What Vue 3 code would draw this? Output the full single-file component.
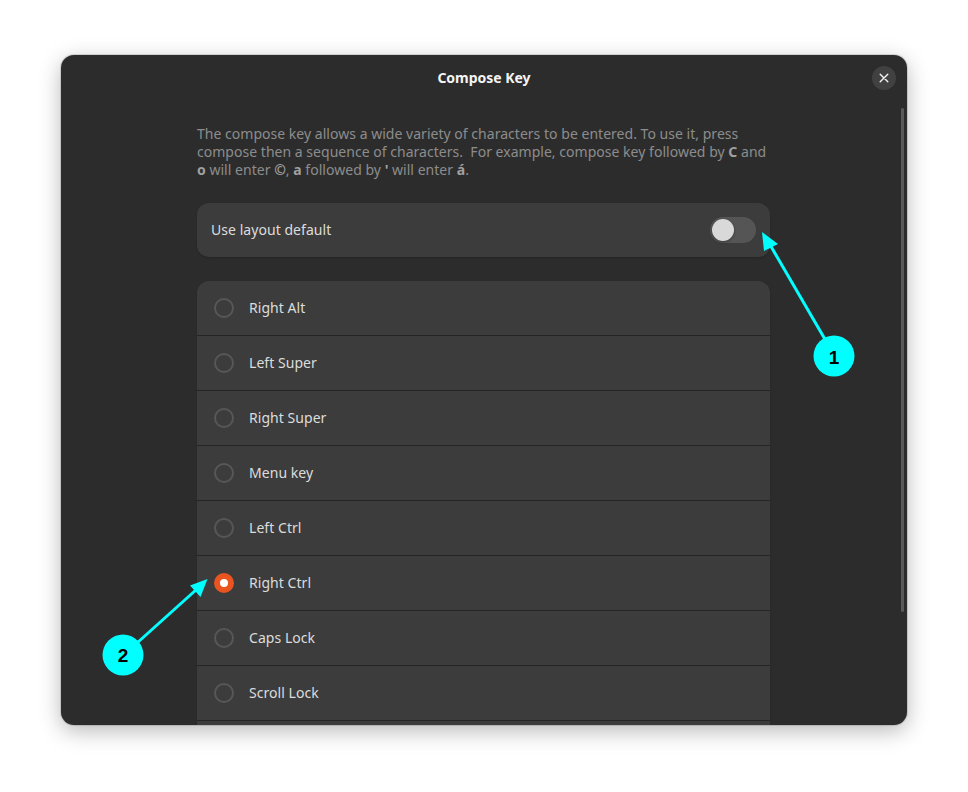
<template>
  <div class="page">
    <section class="dialog">
      <header class="dialog__header">
        <h1 class="dialog__title">Compose Key</h1>
        <button type="button" class="dialog__close" aria-label="Close">
          <svg width="10" height="10" viewBox="0 0 10 10">
            <path d="M1.2 1.2L8.8 8.8M8.8 1.2L1.2 8.8" stroke="#f2f2f2" stroke-width="1.4" stroke-linecap="round" />
          </svg>
        </button>
      </header>

      <div class="dialog__body">
        <p class="hint">
          The compose key allows a wide variety of characters to be entered. To use it, press<br />
          compose then a sequence of characters.&nbsp; For example, compose key followed by <b>C</b> and<br />
          <b>o</b> will enter <b>©</b>, <b>a</b> followed by <b>'</b> will enter <b>á</b>.
        </p>

        <div class="card card--switch">
          <span class="row__label">Use layout default</span>
          <span class="switch"><span class="switch__knob"></span></span>
        </div>

        <ul class="card options">
          <li v-for="opt in options" :key="opt" class="row">
            <span class="radio" :class="{ 'radio--on': opt === selected }"></span>
            <span class="row__label">{{ opt }}</span>
          </li>
        </ul>
      </div>

      <div class="scrollbar"></div>
    </section>

    <svg class="notes" width="968" height="792" viewBox="0 0 968 792">
      <g stroke="#00ffff" stroke-width="3" fill="#00ffff">
        <line x1="826" y1="341" x2="769" y2="243" />
        <line x1="137" y1="643" x2="197" y2="589" />
      </g>
      <polygon points="762,232 778,244 764,251" fill="#00ffff" />
      <polygon points="207.5,579 200.5,597 190,585.5" fill="#00ffff" />
      <circle cx="834" cy="356" r="20.5" fill="#00ffff" />
      <circle cx="123" cy="655" r="20.5" fill="#00ffff" />
      <text x="834" y="364" class="notes__num">1</text>
      <text x="123" y="662" class="notes__num">2</text>
    </svg>
  </div>
</template>

<script setup>
const options = [
  'Right Alt',
  'Left Super',
  'Right Super',
  'Menu key',
  'Left Ctrl',
  'Right Ctrl',
  'Caps Lock',
  'Scroll Lock',
];

const selected = 'Right Ctrl';
</script>

<style>
html,
body {
  margin: 0;
  background: #fff;
}
</style>

<style scoped>
.page {
  position: relative;
  width: 968px;
  height: 792px;
  padding: 55px 61px 67px;
  box-sizing: border-box;
  overflow: hidden;
  font-family: "Noto Sans", sans-serif;
}

.dialog {
  position: relative;
  height: 670px;
  overflow: hidden;
  background: #2c2c2c;
  border-radius: 13px;
  box-shadow: 0 6px 22px rgba(0, 0, 0, 0.28), 0 0 0 1px rgba(0, 0, 0, 0.12);
}

.dialog__header {
  display: flex;
  align-items: center;
  justify-content: center;
  height: 45px;
}

.dialog__title {
  margin: 0;
  font-size: 14px;
  font-weight: 700;
  letter-spacing: -0.02px;
  color: #f4f4f4;
}

.dialog__close {
  position: absolute;
  top: 11px;
  right: 11px;
  display: flex;
  align-items: center;
  justify-content: center;
  width: 24px;
  height: 24px;
  padding: 0;
  border: none;
  border-radius: 50%;
  background: #414141;
}

.dialog__body {
  display: flex;
  flex-direction: column;
  width: 573px;
  margin-left: 136px;
  padding-top: 25px;
}

.hint {
  margin: 0 0 24px;
  font-size: 14px;
  line-height: 18px;
  letter-spacing: 0.025px;
  color: #8c8c8c;
  white-space: nowrap;
}

.hint b {
  font-weight: 700;
  color: #a0a0a0;
}

.card {
  background: #3c3c3c;
  border-radius: 12px;
  box-shadow: 0 1px 2px rgba(0, 0, 0, 0.16);
}

.card--switch {
  display: flex;
  align-items: center;
  justify-content: space-between;
  height: 54px;
  padding: 0 14px;
  margin-bottom: 24px;
}

.switch {
  display: flex;
  align-items: center;
  width: 46px;
  height: 26px;
  padding: 0 2px;
  box-sizing: border-box;
  border-radius: 13px;
  background: #555;
}

.switch__knob {
  width: 22px;
  height: 22px;
  border-radius: 50%;
  background: #d9d9d9;
  box-shadow: 0 1px 3px rgba(0, 0, 0, 0.35);
}

.options {
  margin: 0;
  padding: 0 0 40px;
  list-style: none;
}

.row {
  display: flex;
  align-items: center;
  gap: 15px;
  height: 54px;
  padding-left: 17px;
  border-bottom: 1px solid #252525;
}

.row__label {
  margin-top: -2px;
  font-size: 14px;
  letter-spacing: 0.05px;
  color: #dcdcdc;
}

.radio {
  position: relative;
  width: 20px;
  height: 20px;
  box-sizing: border-box;
  border: 2px solid #575757;
  border-radius: 50%;
}

.radio--on {
  border-color: #e95420;
  background: #e95420;
}

.radio--on::after {
  content: "";
  position: absolute;
  top: 4px;
  left: 4px;
  width: 8px;
  height: 8px;
  border-radius: 50%;
  background: #fff;
}

.scrollbar {
  position: absolute;
  top: 53px;
  right: 3px;
  width: 3px;
  height: 504px;
  border-radius: 2px;
  background: #5a5a5a;
}

.notes {
  position: absolute;
  top: 0;
  left: 0;
  pointer-events: none;
}

.notes__num {
  font-family: "Liberation Sans", sans-serif;
  font-size: 19px;
  font-weight: 700;
  text-anchor: middle;
  fill: #000;
}
</style>
